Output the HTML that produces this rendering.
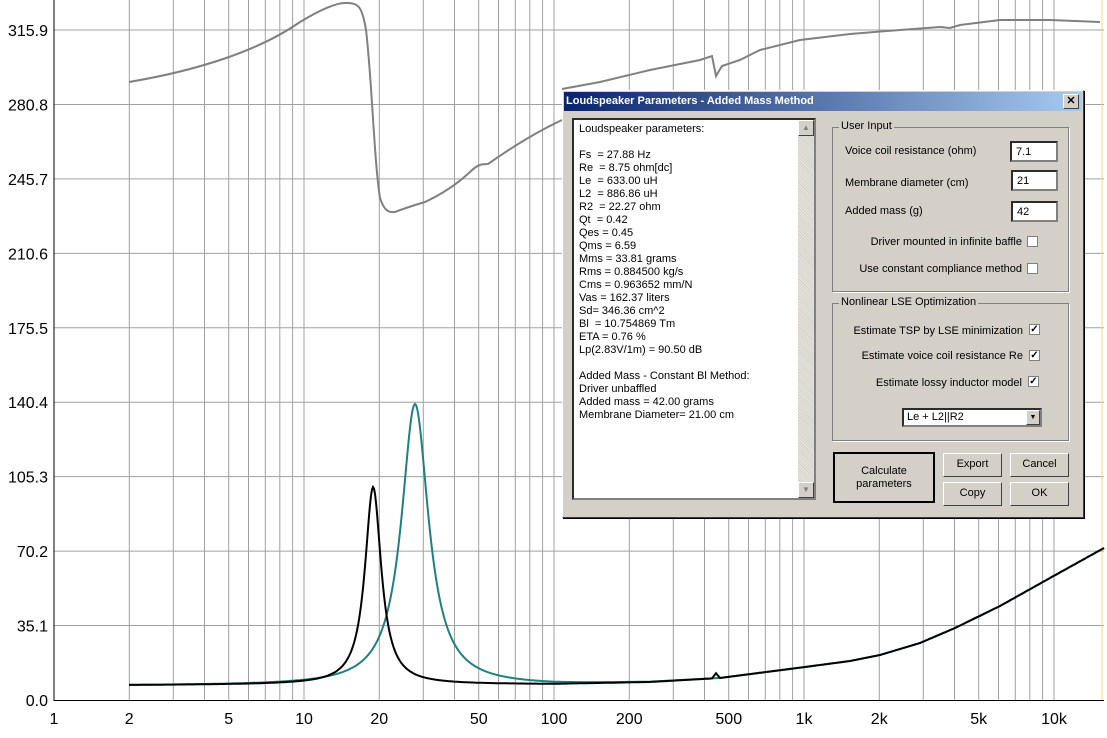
<!DOCTYPE html>
<html><head><meta charset="utf-8"><style>
body{margin:0;width:1107px;height:738px;background:#fff;overflow:hidden;position:relative;font-family:"Liberation Sans",sans-serif}
svg{position:absolute;left:0;top:0}
.dlg{position:absolute;left:562px;top:90px;width:520px;height:426px;background:#d4d0c8;border:1px solid #fff;border-right-color:#404040;border-bottom-color:#404040;box-shadow:1px 1px 0 #000;font-family:"Liberation Sans",sans-serif;font-size:11px;color:#000}
.ttl{position:absolute;left:1px;top:1px;right:1px;height:19px;background:linear-gradient(90deg,#0a246a,#a6caf0);color:#fff;font-weight:bold;font-size:11px;line-height:19px;padding-left:2px}
.cls{position:absolute;right:3px;top:2px;width:14px;height:13px;background:#d4d0c8;border:1px solid #fff;border-right-color:#404040;border-bottom-color:#404040;color:#000;font-size:11px;line-height:12px;text-align:center;font-weight:bold}
.ta{position:absolute;left:9px;top:27px;width:244px;height:382px;background:#fff;border:2px inset #808080;box-sizing:border-box}
.txt{position:absolute;left:5px;top:3px;line-height:13px;white-space:pre;font-size:11px}
.sb{position:absolute;right:0;top:0;width:16px;height:100%;background:repeating-linear-gradient(45deg,#e8e6e0 0 1px,#d4d0c8 1px 2px)}
.sbb{position:absolute;left:0;width:14px;height:14px;background:#d4d0c8;border:1px solid #fff;border-right-color:#404040;border-bottom-color:#404040;font-size:8px;text-align:center;line-height:14px;color:#808080}
.grp{position:absolute;border:1px solid #808080;box-shadow:1px 1px 0 #fff}
.grp .lg{position:absolute;left:6px;top:-8px;background:#d4d0c8;padding:0 2px}
.lbl{position:absolute;white-space:nowrap}
.r{right:61px;text-align:right}
.inp{position:absolute;background:#fff;border:2px inset #808080;box-sizing:border-box;padding:3px 4px;line-height:12px}
.cb{position:absolute;width:11px;height:11px;background:#fff;border:1px solid #808080;box-sizing:border-box;font-size:10px;line-height:9px;text-align:center;font-weight:bold}
.btn{position:absolute;background:#d4d0c8;border:1px solid #fff;border-right-color:#404040;border-bottom-color:#404040;box-sizing:border-box;text-align:center;line-height:20px}
</style></head><body>
<svg id="p" width="1107" height="738"></svg>
<div class="dlg">
<div class="ttl">Loudspeaker Parameters - Added Mass Method<div class="cls">✕</div></div>
<div class="ta"><div class="txt">Loudspeaker parameters:

Fs  = 27.88 Hz
Re  = 8.75 ohm[dc]
Le  = 633.00 uH
L2  = 886.86 uH
R2  = 22.27 ohm
Qt  = 0.42
Qes = 0.45
Qms = 6.59
Mms = 33.81 grams
Rms = 0.884500 kg/s
Cms = 0.963652 mm/N
Vas = 162.37 liters
Sd= 346.36 cm^2
Bl  = 10.754869 Tm
ETA = 0.76 %
Lp(2.83V/1m) = 90.50 dB

Added Mass - Constant Bl Method:
Driver unbaffled
Added mass = 42.00 grams
Membrane Diameter= 21.00 cm</div>
<div class="sb"><div class="sbb" style="top:0">▲</div><div class="sbb" style="bottom:0">▼</div></div></div>
<div class="grp" style="left:269px;top:36px;width:235px;height:163px"><span class="lg">User Input</span></div>
<div class="lbl" style="left:282px;top:54px">Voice coil resistance (ohm)</div>
<div class="inp" style="left:447px;top:50px;width:48px;height:21px">7.1</div>
<div class="lbl" style="left:282px;top:86px">Membrane diameter (cm)</div>
<div class="inp" style="left:448px;top:79px;width:47px;height:21px">21</div>
<div class="lbl" style="left:282px;top:114px">Added mass (g)</div>
<div class="inp" style="left:448px;top:110px;width:47px;height:21px">42</div>
<div class="lbl r" style="top:145px">Driver mounted in infinite baffle</div>
<div class="cb" style="left:464px;top:145px"></div>
<div class="lbl r" style="top:172px">Use constant compliance method</div>
<div class="cb" style="left:464px;top:172px"></div>
<div class="grp" style="left:269px;top:212px;width:235px;height:136px"><span class="lg">Nonlinear LSE Optimization</span></div>
<div class="lbl r" style="top:234px;right:60px">Estimate TSP by LSE minimization</div>
<div class="cb" style="left:466px;top:233px">✓</div>
<div class="lbl r" style="top:259px;right:60px">Estimate voice coil resistance Re</div>
<div class="cb" style="left:466px;top:259px">✓</div>
<div class="lbl r" style="top:286px;right:61px">Estimate lossy inductor model</div>
<div class="cb" style="left:465px;top:285px">✓</div>
<div class="inp" style="left:339px;top:317px;width:140px;height:19px;padding:1px 3px">Le + L2||R2<div style="position:absolute;right:0;top:0;width:14px;height:15px;background:#d4d0c8;border:1px solid #fff;border-right-color:#404040;border-bottom-color:#404040;box-sizing:border-box;font-size:7px;text-align:center;line-height:13px">▼</div></div>
<div class="btn" style="left:270px;top:361px;width:102px;height:51px;border:2px solid #000;line-height:13px;padding-top:11px">Calculate<br>parameters</div>
<div class="btn" style="left:380px;top:362px;width:59px;height:24px">Export</div>
<div class="btn" style="left:447px;top:362px;width:59px;height:24px">Cancel</div>
<div class="btn" style="left:380px;top:391px;width:59px;height:24px">Copy</div>
<div class="btn" style="left:447px;top:391px;width:59px;height:24px">OK</div>
</div>
<script>
const s=document.getElementById('p');let h='';
const X=f=>54+250*Math.log10(f);const Y0=700,dy=74.44;
for(let d=1;d<=10000;d*=10)for(let m=1;m<10;m++){const f=d*m;const x=X(f);if(x>1104)break;if(x>54)h+=`<line x1="${x.toFixed(1)}" y1="0" x2="${x.toFixed(1)}" y2="700" stroke="#a0a0a0"/>`;}
const labs=["0.0","35.1","70.2","105.3","140.4","175.5","210.6","245.7","280.8","315.9"];
labs.forEach((l,i)=>{const y=Y0-i*dy;if(i>0)h+=`<line x1="54" y1="${y}" x2="1104" y2="${y}" stroke="#a0a0a0"/>`;h+=`<text x="48" y="${y+6}" text-anchor="end" font-size="16" font-family="Liberation Sans" fill="#000">${l}</text>`;});
[[1,"1"],[2,"2"],[5,"5"],[10,"10"],[20,"20"],[50,"50"],[100,"100"],[200,"200"],[500,"500"],[1000,"1k"],[2000,"2k"],[5000,"5k"],[10000,"10k"]].forEach(([f,l])=>{h+=`<text x="${X(f)}" y="724" text-anchor="middle" font-size="16" font-family="Liberation Sans" fill="#000">${l}</text>`});
h+=`<line x1="1102" y1="0" x2="1102" y2="700" stroke="#e8e070"/>`;
h+=`<line x1="54" y1="0" x2="54" y2="701" stroke="#000"/><line x1="54" y1="700.5" x2="1104" y2="700.5" stroke="#000"/>`;
const bp=[[129,685],[300,684],[554,684],[650,682],[720,678],[805,667],[850,661],[880,655],[920,643],[955,628],[1000,606],[1050,578],[1104,548]];
function base(x){for(let i=0;i<bp.length-1;i++){if(x<=bp[i+1][0]){let t=(x-bp[i][0])/(bp[i+1][0]-bp[i][0]);return bp[i][1]+t*(bp[i+1][1]-bp[i][1]);}}return 548;}
function curve(fs,A,Q,col){let d='';for(let x=129;x<=1104;x+=1){const f=Math.pow(10,(x-54)/250);const r=f/fs;const v=A/(1+Q*Q*(r-1/r)**2);let y=base(x)-v;if(Math.abs(x-716)<4&&col=='#000')y-=5*(1-Math.abs(x-716)/4);d+=(d?'L':'M')+x+' '+y.toFixed(1);}h+=`<path d="${d}" fill="none" stroke="${col}" stroke-width="2"/>`;}
curve(27.8,280,3.3,'#1f8080');curve(18.9,197,5.5,'#000');
h+=`<path d="M129 82 C200 70 260 50 300 22 C320 10 335 3 345 3 C358 3 362 5 366 30 C372 80 374 160 380 198 C384 210 388 213 395 212 C405 208 415 205 425 202 C440 195 455 186 470 172 C478 164 482 164 488 164 C505 152 530 135 562 120" fill="none" stroke="#808080" stroke-width="2"/>`;
h+=`<path d="M562 89 L600 82 L650 70 L700 60 L712 56 L716 76 L722 66 L740 60 L760 50 L800 40 L850 34 L900 30 L940 27 L950 28 L960 25 L1000 20 L1050 20 L1100 22" fill="none" stroke="#808080" stroke-width="2"/>`;
s.innerHTML=h;
</script>
</body></html>
